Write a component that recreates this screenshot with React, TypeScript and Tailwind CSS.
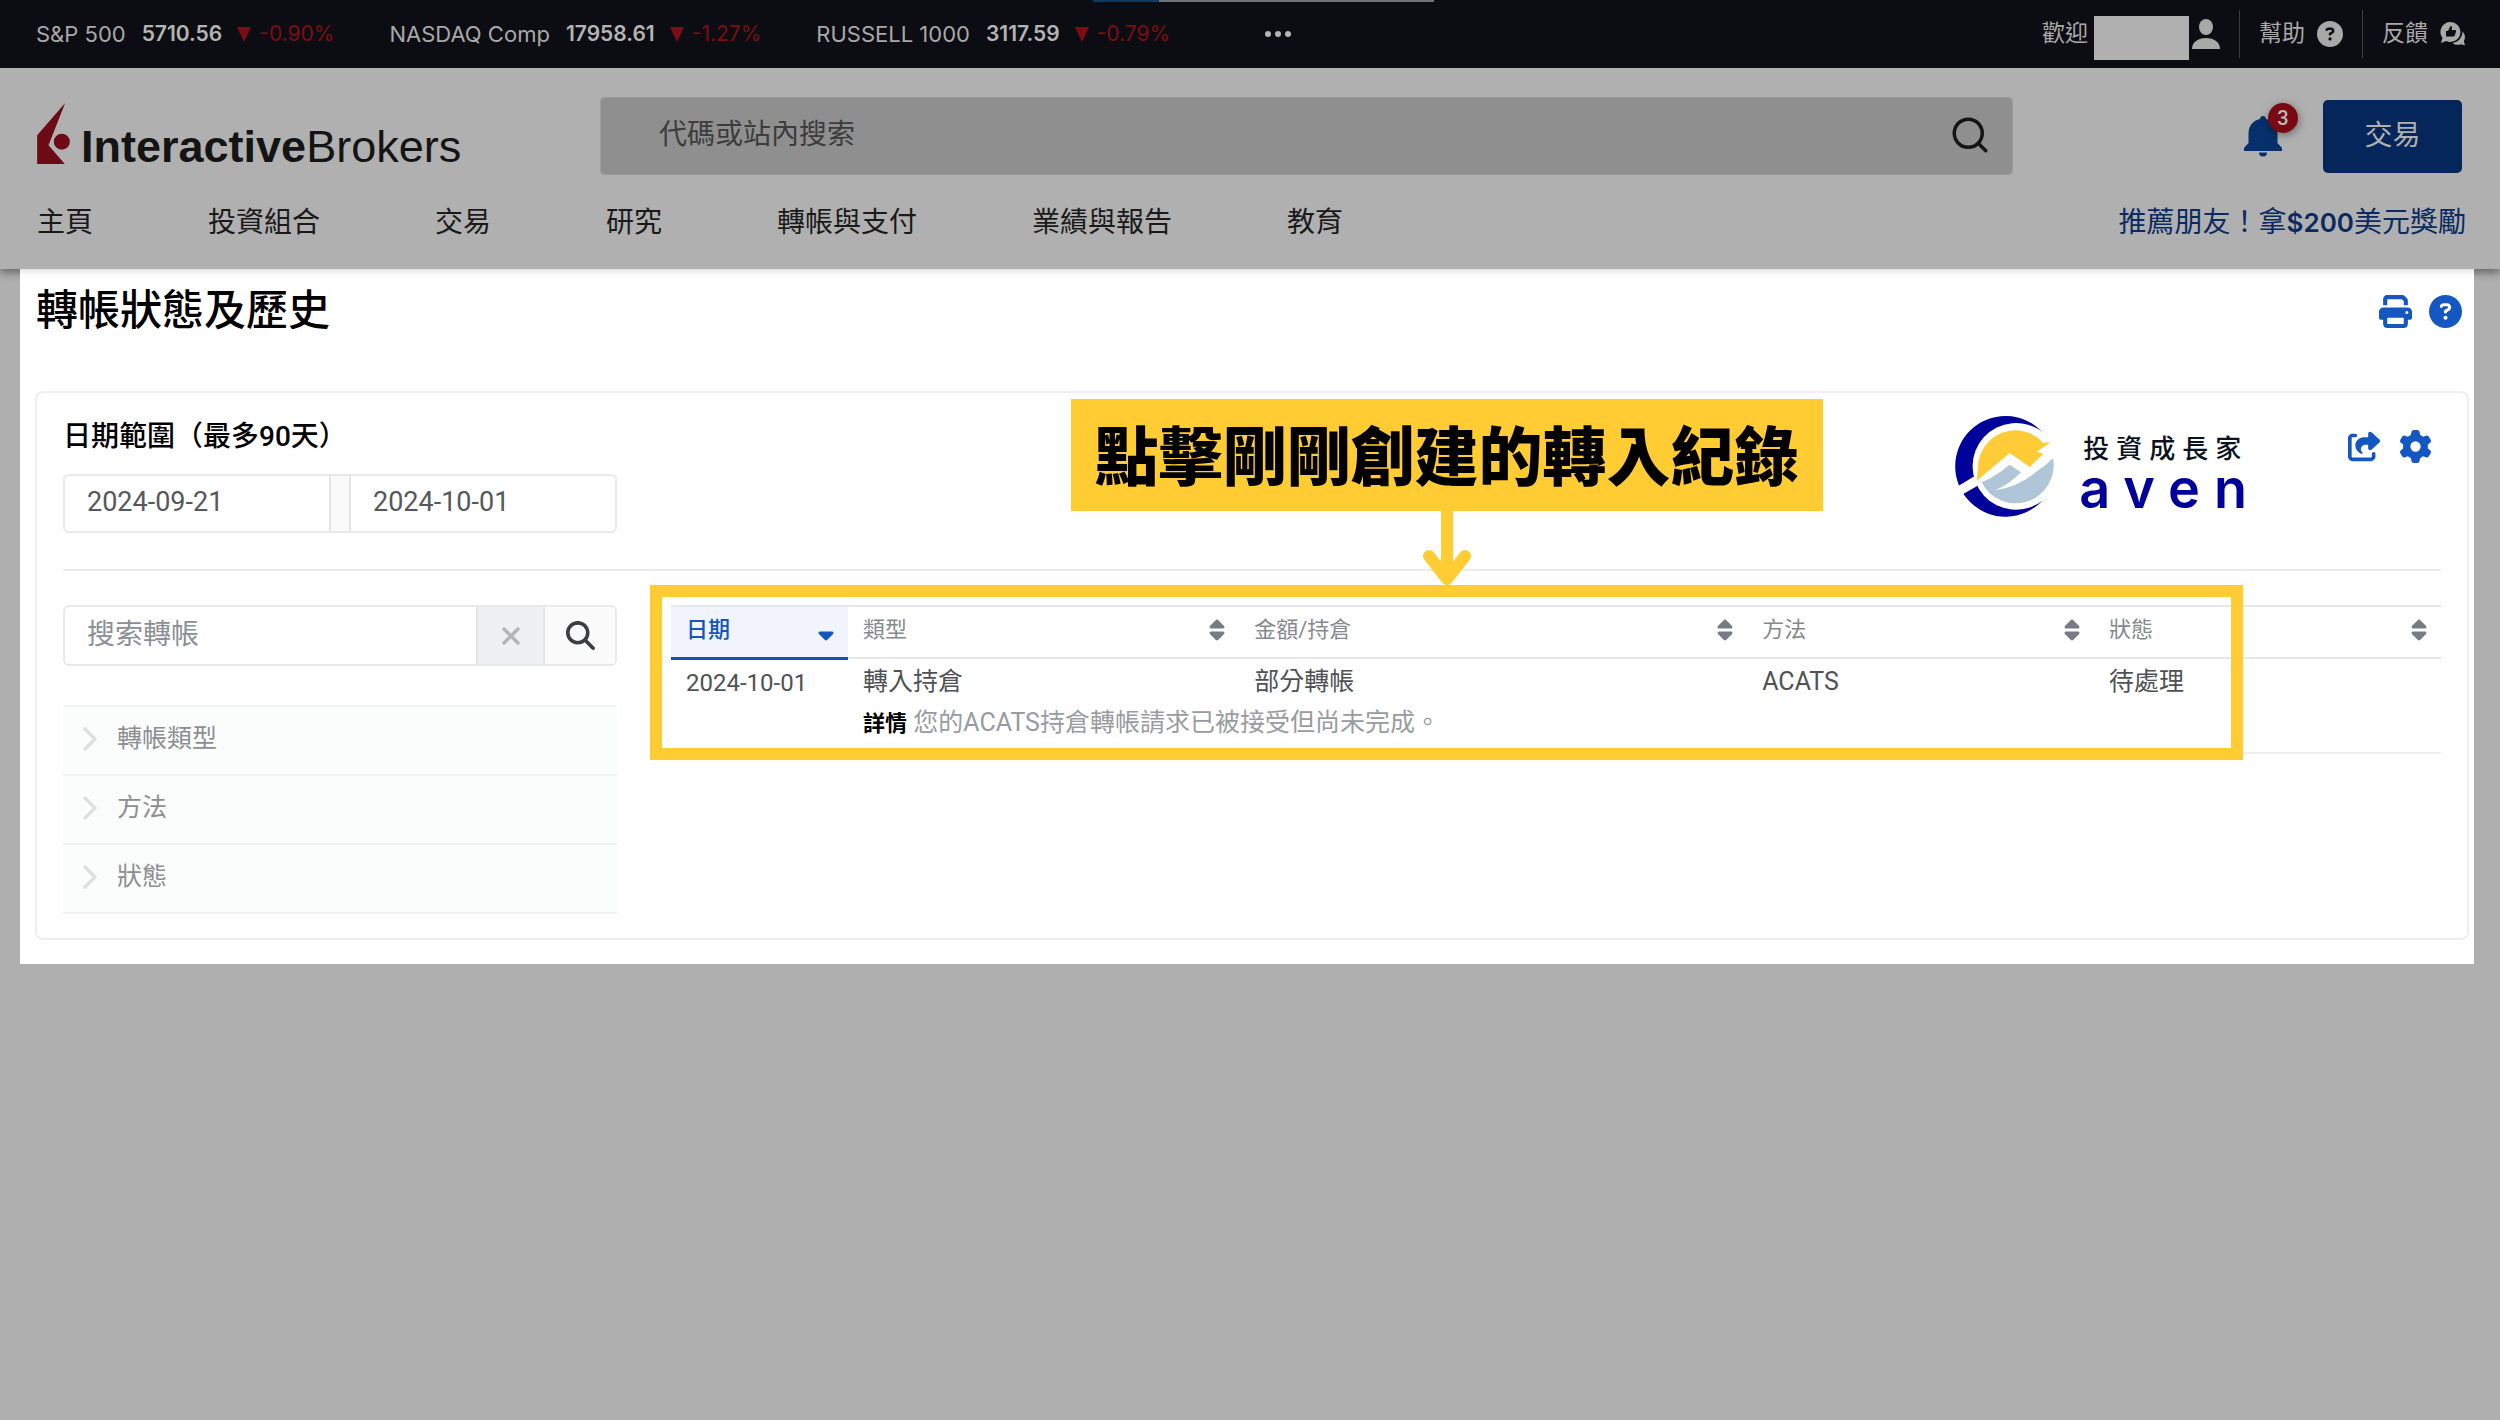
import * as React from 'react';
import { useState } from 'react';
import { ChevronRight, Search } from 'lucide-react';
import {
  FaCircleQuestion,
  FaGear,
  FaMagnifyingGlass,
  FaPrint,
  FaShareFromSquare,
  FaSort,
  FaSortDown,
  FaXmark
} from 'react-icons/fa6';

const tickers = [
  { name: 'S&P 500', value: '5710.56', change: '-0.90%' },
  { name: 'NASDAQ Comp', value: '17958.61', change: '-1.27%' },
  { name: 'RUSSELL 1000', value: '3117.59', change: '-0.79%' }
];

const menus = [
  '主頁',
  '投資組合',
  '交易',
  '研究',
  '轉帳與支付',
  '業績與報告',
  '教育'
];

const filters = ['轉帳類型', '方法', '狀態'];

const columns = [
  { label: '日期', width: 'w-[10%]' },
  { label: '類型', width: 'w-[22.1%]' },
  { label: '金額/持倉', width: '' },
  { label: '方法', width: 'w-[19.6%]' },
  { label: '狀態', width: 'w-[19.6%]' }
];

function UserIcon() {
  return (
    <svg viewBox="0 0 28 30" className="w-7 h-[30px]" fill="currentColor">
      <ellipse cx="14" cy="8" rx="7" ry="8" />
      <path d="M0 30C0 23 6 19 14 19s14 4 14 11z" />
    </svg>
  );
}

function FeedbackIcon() {
  return (
    <svg viewBox="0 0 26 24" className="w-[26px] h-6">
      <path
        fill="currentColor"
        d="M10.500 0a10 10 0 0 1 0 20c-1.500 0-3-.3-4.200-.9L1 21l1.500-5A10 10 0 0 1 10.500 0z"
      />
      <path
        fill="#0c0d12"
        d="M6 9h2l2.500-5c1.300 0 1.900 1 1.500 2.200L11.600 8H15c1 0 1.300 1 1 1.800l-1.300 3.700c-.3.800-.8 1-1.600 1H6z"
      />
      <path
        fill="currentColor"
        d="M22.500 9.500c3 3 3 7 1.300 9.500l1.200 4.500-4-1.300c-3 1.300-6.500.5-8.500-1.300 5.500-.4 9.800-5 10-11.400z"
      />
    </svg>
  );
}

function BellIcon() {
  return (
    <svg viewBox="0 0 38 41" className="w-[38px] h-[41px]" fill="#06306b">
      <path d="M19 0c1.800 0 3 1.200 3 3 7 1.500 11.500 7 11.500 14.500V27l4.500 5v3H0v-3l4.500-5v-9.500C4.500 10 9 4.500 16 3c0-1.800 1.200-3 3-3z" />
      <path d="M15 36.500h8a4 4 0 0 1-8 0z" />
    </svg>
  );
}

function BrokerLogo() {
  return (
    <a href="#home" className="flex items-start gap-[11px] text-[#141414]">
      <svg viewBox="52 33 98 183" className="w-[33px] h-[61px]">
        <path fill="#6c0a15" d="M136 33 52 130v86h83L86 160z" />
        <circle cx="126" cy="149" r="24" fill="#6c0a15" />
      </svg>
      <span className="pt-[22px] font-['Liberation_Sans',sans-serif] text-[45px] leading-[44px]">
        <b>Interactive</b>Brokers
      </span>
    </a>
  );
}

function AvenLogo() {
  return (
    <div className="absolute right-[206px] top-[22px] flex gap-6">
      <svg viewBox="38 46 300 306" className="w-[100px] h-[102px]">
        <path
          fill="#00009a"
          d="M300 97A151 151 0 1 0 300 303A130 130 0 1 1 300 97Z"
        />
        <path fill="#fff" d="M30 270 96 230 106 258 40 296Z" />
        <path
          fill="#ffcb36"
          d="M103 243 107 205A112 112 0 0 1 303 130L325 127 284 156 303 162 262 202 202 160 152 202Z"
        />
        <path
          fill="#b0c5d8"
          d="M118 248Q160 230 202 195L236 218Q200 255 158 272Q225 262 280 218Q310 198 332 176A114 114 0 0 1 118 248Z"
        />
      </svg>
      <div className="flex flex-col pt-4">
        <span className="pl-1 text-[26px] leading-9 font-medium tracking-[7px] text-[#0d1220]">
          投資成長家
        </span>
        <span className="font-['Inter',sans-serif] text-[54px] leading-[44px] font-semibold tracking-[14px] text-[#00009a]">
          aven
        </span>
      </div>
    </div>
  );
}

function Callout() {
  return (
    <div className="absolute -left-[21px] right-[198px] -top-5 -bottom-[6px] border-12 border-[#ffcc33] pointer-events-none">
      <div className="absolute bottom-full left-1/2 -translate-x-1/2 mb-3 flex flex-col items-center">
        <p className="h-28 px-6 pt-2 flex items-center bg-[#ffcc33] text-black text-[64px] font-black whitespace-nowrap">
          點擊剛剛創建的轉入紀錄
        </p>
        <svg viewBox="0 0 48 74" className="w-12 h-[74px]" fill="none">
          <path
            d="M24 0V64M6 45 24 68 42 45"
            stroke="#ffcc33"
            strokeWidth="12"
            strokeLinecap="round"
            strokeLinejoin="round"
          />
        </svg>
      </div>
    </div>
  );
}

function TopBar() {
  return (
    <div className="relative h-[68px] pl-9 pr-[34px] flex items-center justify-between bg-[#0c0d12] text-[#a8a8a8]">
      <div className="absolute top-0 left-[1093px] flex">
        <div className="w-[66px] h-[2px] bg-[#0b3a60]" />
        <div className="w-[275px] h-[2px] bg-[#6f7275]" />
      </div>
      <div className="flex items-center gap-[55px] font-['Inter',sans-serif] text-[21px]">
        {tickers.map((ticker) => (
          <div key={ticker.name} className="flex items-center">
            <span className="text-[22px]">{ticker.name}</span>
            <b className="ml-4 font-semibold text-[#b4b4b4]">{ticker.value}</b>
            <svg viewBox="0 0 14 15" className="w-[14px] h-[15px] ml-[15px]">
              <path d="M0 0h14L7 15z" fill="#7d0c14" />
            </svg>
            <span className="ml-2 text-[#7d0c14]">{ticker.change}</span>
          </div>
        ))}
        <button aria-label="更多" className="ml-10 flex gap-1">
          <span className="size-[6px] rounded-full bg-[#b4b4b4]" />
          <span className="size-[6px] rounded-full bg-[#b4b4b4]" />
          <span className="size-[6px] rounded-full bg-[#b4b4b4]" />
        </button>
      </div>
      <div className="flex items-center text-[23px]">
        <span>歡迎</span>
        <span className="w-[95px] h-11 mt-2 ml-[6px] mr-[3px] bg-[#b0b0b0]" />
        <UserIcon />
        <span className="w-px h-12 mx-[19px] bg-[#3b3c40]" />
        <a href="#help" className="flex items-center gap-3">
          幫助
          <FaCircleQuestion size={26} />
        </a>
        <span className="w-px h-12 mx-[19px] bg-[#3b3c40]" />
        <a href="#feedback" className="flex items-center gap-3">
          反饋
          <FeedbackIcon />
        </a>
      </div>
    </div>
  );
}

function Header() {
  return (
    <header className="bg-[#b0b0b0] pt-[29px] pl-[37px] pr-[34px] shadow-[0_4px_8px_rgba(0,0,0,0.4)]">
      <div className="flex items-center">
        <div className="w-[563px] shrink-0">
          <BrokerLogo />
        </div>
        <form className="relative flex-1 h-[78px] flex items-center rounded-sm bg-[#8f8f8f] border border-[#9c9c9c]">
          <input
            type="text"
            aria-label="代碼或站內搜索"
            placeholder="代碼或站內搜索"
            className="flex-1 h-full pl-[58px] pb-1 text-[28px] placeholder:text-[#3c3c3c] outline-none"
          />
          <button type="button" aria-label="搜索" className="mr-[21px] pb-[2px] text-[#141414]">
            <Search size={42} strokeWidth={2} />
          </button>
        </form>
        <button aria-label="通知" className="relative ml-[231px]">
          <BellIcon />
          <span className="absolute -top-[13px] left-6 size-[30px] flex items-center justify-center rounded-full bg-[#7a0812] text-[#b8b8b8] text-[20px] font-medium shadow-[1px_2px_8px_rgba(0,0,0,0.4)]">
            3
          </span>
        </button>
        <button className="w-[139px] h-[73px] ml-[41px] mr-1 rounded-[5px] bg-[#04265a] text-[#b0b0b0] text-[28px]">
          交易
        </button>
      </div>
      <nav className="mt-7 pb-[26px] flex items-center justify-between text-[28px] leading-10 text-[#1a1a1a]">
        <ul className="flex gap-[115px]">
          {menus.map((menu) => (
            <li key={menu}>
              <a href="#menu">{menu}</a>
            </li>
          ))}
        </ul>
        <a href="#refer" className="text-[#0b2a60]">
          推薦朋友！拿
          <b className="font-['Inter',sans-serif] text-[26px] leading-none font-semibold">
            $200
          </b>
          美元獎勵
        </a>
      </nav>
    </header>
  );
}

function TransferFilter() {
  const [keyword, setKeyword] = useState('');

  return (
    <aside className="w-[554px] shrink-0">
      <div className="h-[61px] flex rounded-md border-2 border-[#e9e9ea] overflow-hidden">
        <input
          type="text"
          aria-label="搜索轉帳"
          placeholder="搜索轉帳"
          value={keyword}
          onChange={(event: React.ChangeEvent<HTMLInputElement>) =>
            setKeyword(event.target.value)
          }
          className="flex-1 min-w-0 pl-[22px] pb-[2px] text-[28px] placeholder:text-[#8b9096] outline-none"
        />
        <button
          aria-label="清除"
          onClick={() => setKeyword('')}
          className="w-[69px] flex items-center justify-center bg-[#eff0f1] border-x-2 border-[#e4e5e6] text-[#b4b6b8]"
        >
          <FaXmark size={28} />
        </button>
        <button
          aria-label="搜索"
          className="w-[70px] flex items-center justify-center bg-[#fbfbfb] text-[#3b3d40]"
        >
          <FaMagnifyingGlass size={29} />
        </button>
      </div>
      <ul className="mt-[39px] border-t-2 border-[#f5f7f7]">
        {filters.map((filter) => (
          <li key={filter} className="border-b-2 border-[#f0f2f2]">
            <button className="w-full h-[67px] pl-[7px] pb-1 flex items-center bg-[#fbfcfc] text-[25px] text-[#8c8f91]">
              <ChevronRight size={40} strokeWidth={2} className="text-[#dde0e0]" />
              <span className="ml-[7px]">{filter}</span>
            </button>
          </li>
        ))}
      </ul>
    </aside>
  );
}

function TransferTable() {
  return (
    <div className="relative flex-1 self-start">
      <table className="w-full table-fixed border-collapse text-left text-[25px] text-[#4f5255]">
        <thead>
          <tr className="border-t-2 border-b-2 border-[#e6e7e9]">
            {columns.map((column, index) => (
              <th
                key={column.label}
                className={
                  index === 0
                    ? `${column.width} h-[52px] pl-[15px] pr-[10px] pb-1 bg-[#f1f4fd] border-b-3 border-[#1451b8] text-[#1455c0] font-medium`
                    : `${column.width} h-[52px] pl-[15px] pr-[10px] pb-1 text-[#84898e] font-normal`
                }
              >
                <button className="w-full flex items-center justify-between text-[22px] leading-8">
                  {column.label}
                  {index === 0 ? (
                    <FaSortDown size={24} />
                  ) : (
                    <FaSort size={24} className="text-[#767c83]" />
                  )}
                </button>
              </th>
            ))}
          </tr>
        </thead>
        <tbody>
          <tr className="align-top leading-10">
            <td className="pt-[3px] px-[15px] text-[24px]">2024-10-01</td>
            <td className="pt-[3px] px-[15px]">轉入持倉</td>
            <td className="pt-[3px] px-[15px]">部分轉帳</td>
            <td className="pt-[3px] px-[15px]">ACATS</td>
            <td className="pt-[3px] px-[15px]">待處理</td>
          </tr>
          <tr className="border-b-2 border-[#efefef]">
            <td />
            <td colSpan={4} className="px-[15px] pb-2 leading-10 text-[#999c9f]">
              <b className="text-[22px] text-black">詳情</b>{' '}
              您的ACATS持倉轉帳請求已被接受但尚未完成。
            </td>
          </tr>
        </tbody>
      </table>
      <Callout />
    </div>
  );
}

export default function App() {
  const [startDate, setStartDate] = useState('2024-09-21');
  const [endDate, setEndDate] = useState('2024-10-01');

  return (
    <div
      lang="zh-Hant"
      className="min-h-screen bg-[#afafaf] font-['Roboto','Noto_Sans_CJK_TC',sans-serif]"
    >
      <TopBar />
      <Header />
      <main className="relative ml-5 mr-[26px] pl-[15px] pr-[5px] pt-[18px] pb-6 bg-white shadow-[inset_0_8px_6px_-6px_rgba(0,0,0,0.15)]">
        <div className="h-12 pl-px pr-[7px] flex items-center justify-between">
          <h1 className="text-[42px] leading-[48px] font-medium text-black">
            轉帳狀態及歷史
          </h1>
          <div className="flex gap-[17px] text-[#1456c2]">
            <button aria-label="列印">
              <FaPrint size={33} />
            </button>
            <button aria-label="說明">
              <FaCircleQuestion size={33} />
            </button>
          </div>
        </div>
        <section className="relative mt-14 px-[26px] pt-6 pb-6 rounded-lg border-2 border-[#efefef]">
          <div className="h-10 flex items-center justify-between">
            <h2 className="text-[28px] font-medium text-black">
              日期範圍（最多90天）
            </h2>
            <div className="flex gap-[18px] pt-[18px] pr-[9px] text-[#1456c2]">
              <button aria-label="匯出">
                <FaShareFromSquare size={33} />
              </button>
              <button aria-label="設定">
                <FaGear size={33} />
              </button>
            </div>
          </div>
          <div className="mt-[17px] w-[554px] h-[59px] flex rounded-md border-2 border-[#eaeaea] text-[27px] text-[#55585b] overflow-hidden">
            <input
              type="text"
              aria-label="開始日期"
              value={startDate}
              onChange={(event) => setStartDate(event.target.value)}
              className="flex-1 min-w-0 pl-[22px] pb-[2px] outline-none"
            />
            <span className="w-[22px] bg-[#fafafa] border-x-2 border-[#e6e6e6]" />
            <input
              type="text"
              aria-label="結束日期"
              value={endDate}
              onChange={(event) => setEndDate(event.target.value)}
              className="flex-1 min-w-0 pl-[22px] pb-[2px] outline-none"
            />
          </div>
          <hr className="mt-9 mb-[34px] border-t-2 border-[#ebebeb]" />
          <div className="flex gap-[54px]">
            <TransferFilter />
            <TransferTable />
          </div>
          <AvenLogo />
        </section>
      </main>
    </div>
  );
}
